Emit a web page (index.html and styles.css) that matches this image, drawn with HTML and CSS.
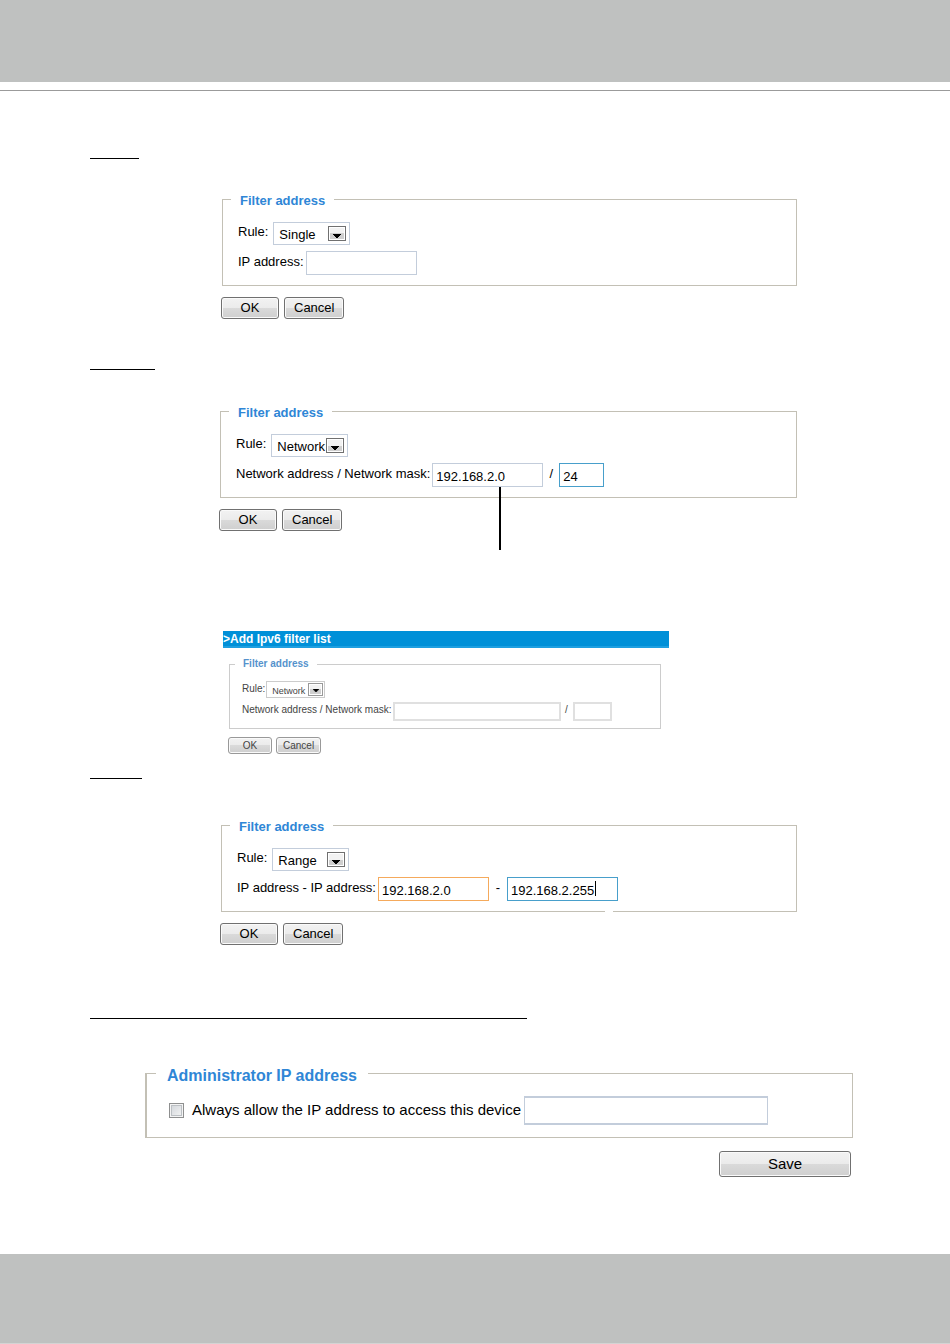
FILE: index.html
```html
<!DOCTYPE html>
<html lang="en">
<head>
<meta charset="utf-8">
<title>Filter address</title>
<link rel="stylesheet" href="styles.css">
</head>
<body>
<header class="band band-top"></header>
<main class="page">
  <div class="mark mark-single"></div>
  <form class="panel panel-single">
    <fieldset class="group">
      <legend>Filter address</legend>
      <div class="row">
        <label for="rule1">Rule:</label>
        <span class="pick"><select id="rule1"><option>Single</option></select><span class="arrow"><svg viewBox="0 0 8 4"><path d="M0 0h8v1H7v1H6v1H5v1H3V3H2V2H1V1H0z"/></svg></span></span>
      </div>
      <div class="row">
        <label for="ip1">IP address:</label>
        <input class="box" id="ip1" type="text">
      </div>
    </fieldset>
    <div class="actions"><button type="button">OK</button><button type="button">Cancel</button></div>
  </form>

  <div class="mark mark-network"></div>
  <form class="panel panel-network">
    <fieldset class="group">
      <legend>Filter address</legend>
      <div class="row">
        <label for="rule2">Rule:</label>
        <span class="pick"><select id="rule2"><option>Network</option></select><span class="arrow"><svg viewBox="0 0 8 4"><path d="M0 0h8v1H7v1H6v1H5v1H3V3H2V2H1V1H0z"/></svg></span></span>
      </div>
      <div class="row">
        <label for="net2">Network address / Network mask:</label>
        <span class="field"><input class="box" id="net2" type="text" value="192.168.2.0"><span class="pointer"></span></span>
        <span class="sep sep-slash">/</span>
        <input class="box box-mask focused" type="text" value="24" aria-label="Network mask">
      </div>
    </fieldset>
    <div class="actions"><button type="button">OK</button><button type="button">Cancel</button></div>
  </form>

  <form class="small">
    <h2 class="banner">&gt;Add Ipv6 filter list</h2>
    <fieldset class="group">
      <legend>Filter address</legend>
      <div class="row">
        <label for="rule3">Rule:</label>
        <span class="pick"><select id="rule3"><option>Network</option></select><span class="arrow"><svg viewBox="0 0 8 4"><path d="M0 0h8v1H7v1H6v1H5v1H3V3H2V2H1V1H0z"/></svg></span></span>
      </div>
      <div class="row">
        <label for="net3">Network address / Network mask:</label>
        <input class="box" id="net3" type="text">
        <span class="sep">/</span>
        <input class="box box-mask" type="text" aria-label="Network mask">
      </div>
    </fieldset>
    <div class="actions"><button type="button">OK</button><button type="button">Cancel</button></div>
  </form>

  <div class="mark mark-range"></div>
  <form class="panel panel-range">
    <fieldset class="group group-range">
      <legend>Filter address</legend>
      <div class="row">
        <label for="rule4">Rule:</label>
        <span class="pick"><select id="rule4"><option>Range</option></select><span class="arrow"><svg viewBox="0 0 8 4"><path d="M0 0h8v1H7v1H6v1H5v1H3V3H2V2H1V1H0z"/></svg></span></span>
      </div>
      <div class="row">
        <label for="from4">IP address - IP address:</label>
        <input class="box warned" id="from4" type="text" value="192.168.2.0">
        <span class="sep">-</span>
        <span class="field"><input class="box focused" type="text" value="192.168.2.255" aria-label="Last IP address"><span class="caret"></span></span>
      </div>
    </fieldset>
    <div class="actions"><button type="button">OK</button><button type="button">Cancel</button></div>
  </form>

  <div class="mark mark-admin"></div>
  <form class="admin">
    <fieldset class="group">
      <legend>Administrator IP address</legend>
      <div class="row">
        <input class="tick" id="allow" type="checkbox">
        <label for="allow">Always allow the IP address to access this device</label>
        <input class="box" type="text" aria-label="Administrator IP address">
      </div>
    </fieldset>
    <div class="actions"><button type="button">Save</button></div>
  </form>
</main>
<footer class="band band-bottom"></footer>
</body>
</html>
```
FILE: styles.css
```css
* { box-sizing: border-box; }
body {
  margin: 0;
  min-height: 100vh;
  display: flex;
  flex-direction: column;
  background: #fff;
  color: #000;
  font: 13px/16px "Liberation Sans", Arial, sans-serif;
}
input, select, button { font: inherit; color: inherit; margin: 0; }

.band { background: #bfc1c0; flex: none; }
.band-top { height: 82px; }
.band-bottom { height: 90px; margin-top: auto; border-bottom: 1px solid #d4d4d4; }
.page {
  margin-top: 8px;
  padding: 67px 97px 40px 90px;
  border-top: 1px solid #9b9b9b;
}

.mark { height: 1px; background: #000; }
.mark-single { width: 49px; }
.mark-network { width: 65px; margin-top: 50px; }
.mark-range { width: 52px; margin-top: 24px; }
.mark-admin { width: 437px; max-width: 100%; margin-top: 73px; }

.panel { margin-right: 56px; }
.panel-single { margin-top: 33px; margin-left: 131px; }
.panel-network { margin-top: 34px; margin-left: 129px; }
.panel-range { margin-top: 39px; margin-left: 130px; }

.group {
  position: relative;
  margin: 0 0 0 1px;
  padding: 15px 8px 10px;
  border: 1px solid #c3c0b5;
  min-width: 0;
}
legend { padding: 3px 9px 0; color: #2f86d6; font-weight: bold; line-height: 12px; }
.row { display: flex; align-items: flex-start; padding-left: 7px; }
.row + .row { margin-top: 6px; }
.row label { margin-right: 5px; padding-top: 2px; white-space: nowrap; }
.row + .row label { margin-right: 2px; padding-top: 3px; }

.pick { position: relative; display: flex; width: 77px; height: 23px; }
.pick select {
  appearance: none;
  width: 100%;
  padding: 3px 0 0 5px;
  border: 1px solid #c3cddb;
  border-radius: 0;
  background: #fff;
}
.arrow {
  position: absolute;
  top: 4px;
  right: 4px;
  width: 18px;
  height: 15px;
  border: 1px solid #707070;
  box-shadow: inset 0 0 0 1px #fff;
  background: linear-gradient(#f2f2f2 50%, #cfcfcf 50%);
  pointer-events: none;
}
.arrow svg { display: block; width: 8px; height: 4px; margin: 7px auto 0; }

.box {
  width: 111px;
  height: 24px;
  padding: 2px 3px 0;
  border: 1px solid #c3cddb;
  border-radius: 0;
  background: #fff;
}
.box-mask { width: 45px; }
.focused { border-color: #479fcb; }
.warned { border-color: #f5aa5c; }
.sep { width: 18px; padding-top: 3px; text-align: center; }
.sep-slash { width: 16px; }
.field { position: relative; display: flex; }
.pointer { position: absolute; top: 24px; left: 67px; width: 2px; height: 63px; background: #000; }
.caret { position: absolute; top: 4px; left: 88px; width: 1px; height: 15px; background: #000; }
.group-range::after {
  content: "";
  position: absolute;
  right: 183px;
  bottom: -1px;
  width: 8px;
  height: 1px;
  background: #fff;
}

.actions { display: flex; gap: 5px; margin-top: 11px; }
.actions button {
  min-width: 58px;
  height: 22px;
  padding: 0 9px;
  border: 1px solid #707070;
  border-radius: 3px;
  box-shadow: inset 0 0 0 1px #fafafa;
  background: linear-gradient(#f2f2f2, #ebebeb 50%, #dadada 50%, #cfcfcf);
}

.small {
  width: 446px;
  max-width: 100%;
  margin: 100px 0 0 133px;
  font-size: 10px;
  line-height: 12px;
  color: #444;
}
.small .banner {
  margin: 0;
  height: 17px;
  border-bottom: 2px solid #1e9fe0;
  background: #0090d8;
  color: #fff;
  font-size: 12px;
  line-height: 16px;
}
.small .group { margin: 10px 8px 0 6px; padding: 11px 5px 7px; border-color: #ccc; }
.small legend { padding: 0 8px; color: #5592cc; }
.small .row + .row { margin-top: 4px; }
.small .row label { margin-right: 1px; padding-top: 2px; }
.small .pick { width: 59px; height: 17px; }
.small .pick select { padding: 2px 0 0 5px; border-color: #ccc; font-size: 9px; }
.small .arrow { top: 2px; right: 2px; width: 15px; height: 13px; border-color: #999; }
.small .arrow svg { width: 6px; height: 3px; margin-top: 5px; }
.small .box { width: 168px; height: 19px; border: 2px solid #e0e0e0; }
.small .box-mask { width: 39px; }
.small .sep { width: 12px; padding-top: 2px; }
.small .actions { gap: 4px; margin: 8px 0 0 5px; }
.small button { min-width: 44px; height: 17px; padding: 0 6px; border-color: #999; }

.admin { margin: 46px 0 0 55px; font-size: 15px; line-height: 18px; }
.admin .group { margin: 0; padding: 14px 9px 12px; border-left-width: 2px; }
.admin legend { padding: 5px 11px 0; font-size: 16px; }
.admin .row { align-items: center; padding-left: 13px; }
.admin .row label { margin: 0 3px 0 8px; padding: 0 0 2px; }
.admin .box { width: 244px; height: 29px; border-width: 2px 1px; }
.tick {
  appearance: none;
  width: 15px;
  height: 15px;
  border: 1px solid #8e8f8f;
  box-shadow: inset 0 0 0 1px #f4f4f4, inset 0 0 0 2px #bcc0c4;
  background: linear-gradient(135deg, #cfd3d8, #f6f6f6);
}
.admin .actions { justify-content: flex-end; margin: 13px 2px 0 0; }
.admin .actions button { width: 132px; height: 26px; }
```
